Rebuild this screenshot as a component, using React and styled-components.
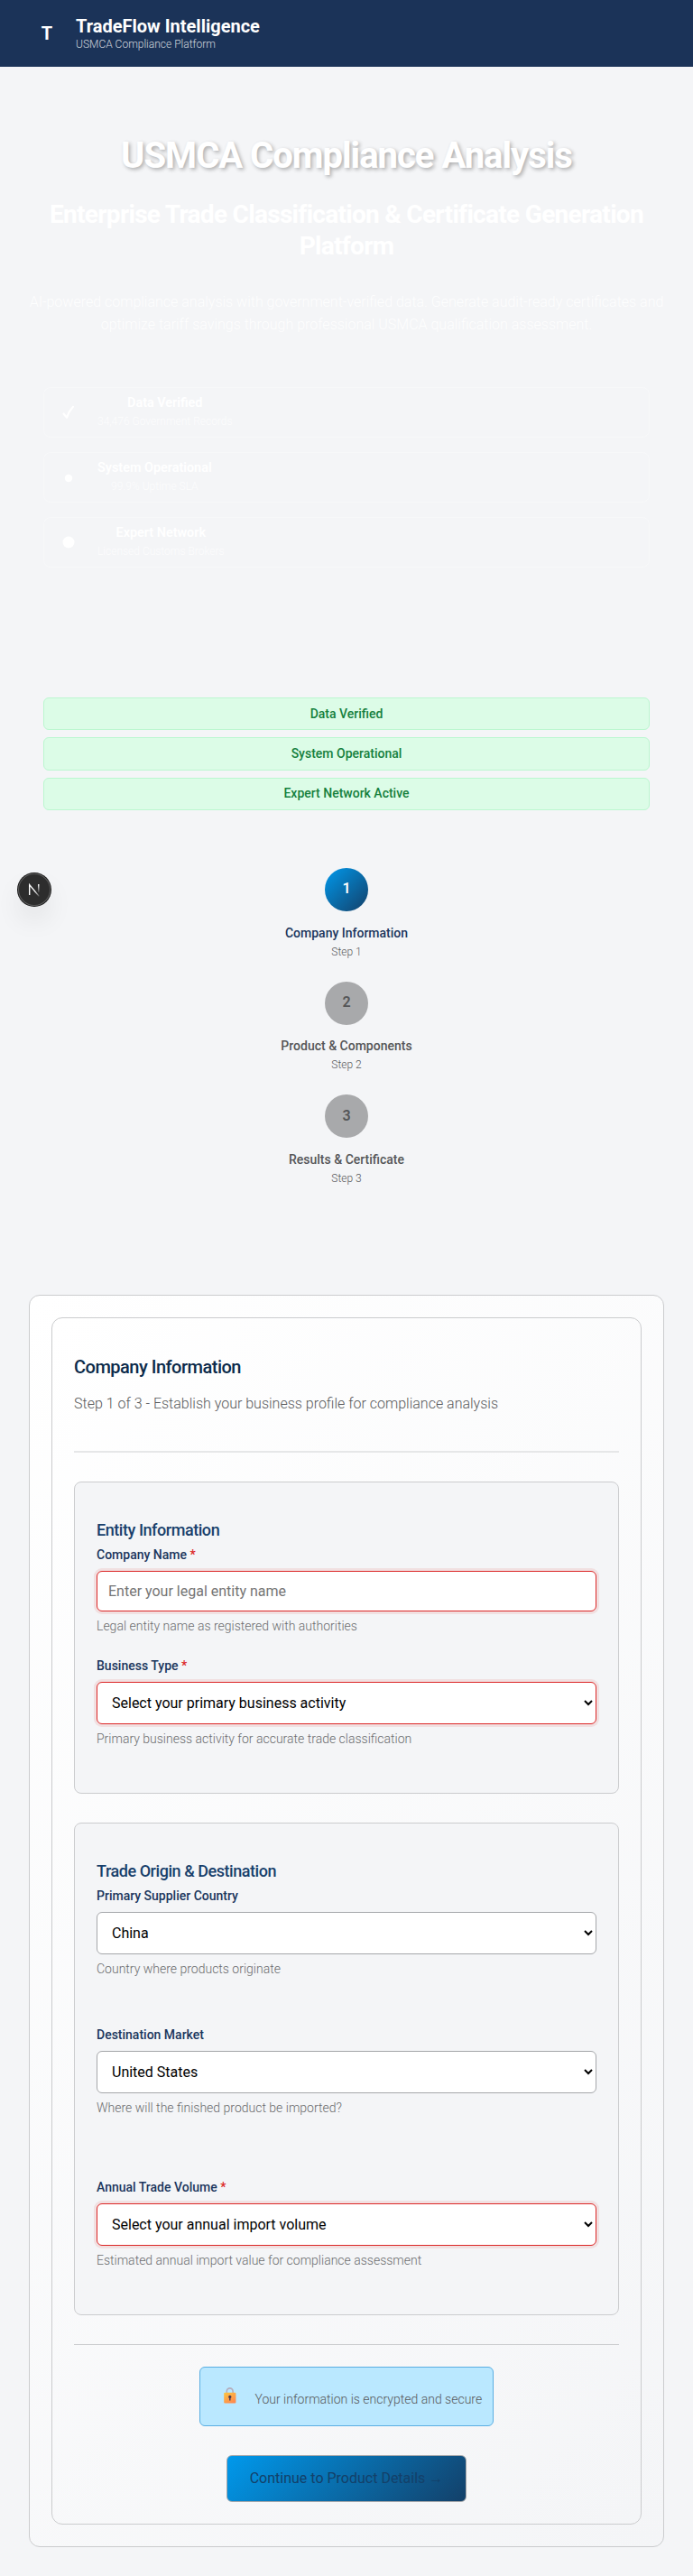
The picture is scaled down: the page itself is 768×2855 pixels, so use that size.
import React from 'react';
import styled, { createGlobalStyle, css } from 'styled-components';

const Global = createGlobalStyle`
  *, *::before, *::after { box-sizing: border-box; }
  body {
    margin: 0;
    background: #f4f5f7;
    font-family: Roboto, "Liberation Sans", sans-serif;
    font-size: 16px;
    font-weight: 300;
    line-height: 1.6;
    color: #134069;
  }
  h1, h2, h3, p { margin: 0; }
`;

const Page = styled.div`
  position: relative;
  display: flex;
  flex-direction: column;
  height: 2855px;
`;

const Header = styled.header`
  display: flex;
  align-items: center;
  gap: 12px;
  height: 74px;
  padding: 0 32px;
  background: #1b3358;
  color: #fff;
`;
const LogoMark = styled.div`
  width: 40px;
  text-align: center;
  font-size: 20px;
  font-weight: 700;
  line-height: 32px;
`;
const Brand = styled.div`
  display: flex;
  flex-direction: column;
`;
const BrandName = styled.div`
  font-size: 20px;
  font-weight: 700;
  line-height: 24px;
`;
const BrandTag = styled.div`
  font-size: 12px;
  line-height: 16px;
  color: rgba(255, 255, 255, 0.8);
`;

const Hero = styled.section`
  display: flex;
  flex-direction: column;
  align-items: center;
  height: 651px;
  padding: 74px 24px 0;
  text-align: center;
  color: #fff;
`;
const HeroTitle = styled.h1`
  font-size: 40px;
  font-weight: 700;
  line-height: 50px;
  letter-spacing: -0.025em;
  text-shadow: 2px 2px 4px rgba(0, 0, 0, 0.3);
`;
const HeroSubtitle = styled.h2`
  margin-top: 22px;
  padding: 0 24px;
  font-size: 28px;
  font-weight: 700;
  line-height: 35px;
  letter-spacing: -0.025em;
`;
const HeroText = styled.p`
  margin-top: 31.5px;
  font-size: 16px;
  opacity: 0.9;
`;
const FeatureList = styled.div`
  display: flex;
  flex-direction: column;
  gap: 16px;
  width: 672px;
  margin-top: 56px;
`;
const Feature = styled.div`
  display: flex;
  align-items: center;
  gap: 21px;
  height: 56px;
  padding: 0 16px;
  border: 1px solid rgba(255, 255, 255, 0.3);
  border-radius: 8px;
`;
const FeatureIcon = styled.div`
  display: flex;
  justify-content: center;
  width: 22px;
`;
const FeatureName = styled.div`
  font-size: 14.4px;
  font-weight: 600;
  line-height: 22px;
`;
const FeatureNote = styled.div`
  font-size: 12px;
  line-height: 19px;
  opacity: 0.8;
`;

const BadgeList = styled.div`
  display: flex;
  flex-direction: column;
  gap: 8px;
  margin: 48px 48px 0;
`;
const Badge = styled.div`
  padding: 5.5px 6px 6.5px;
  border: 1px solid #bbf7d0;
  border-radius: 6px;
  background: #dcfce7;
  color: #15803d;
  font-size: 14px;
  font-weight: 500;
  text-align: center;
`;

const Steps = styled.div`
  display: flex;
  flex-direction: column;
  gap: 23px;
  margin-top: 64px;
`;
const Step = styled.div`
  display: flex;
  flex-direction: column;
  align-items: center;
`;
const StepCircle = styled.div`
  display: flex;
  align-items: center;
  justify-content: center;
  width: 48px;
  height: 48px;
  padding-bottom: 2px;
  margin-bottom: 12.5px;
  border-radius: 50%;
  font-weight: 600;
  background: ${(p) => (p.$active ? 'linear-gradient(135deg, #0099ec, #134069)' : '#a8a9ab')};
  color: ${(p) => (p.$active ? '#fff' : '#555658')};
`;
const StepTitle = styled.div`
  margin-bottom: 0.5px;
  font-size: 14px;
  font-weight: 500;
  color: ${(p) => (p.$active ? '#1b365d' : '#555658')};
`;
const StepNote = styled.div`
  font-size: 12px;
  color: #58595b;
`;

const Card = styled.div`
  padding: 24px;
  border: 1px solid #cbccce;
  border-radius: 12px;
  background: linear-gradient(135deg, #ffffff, #f4f5f7);
`;
const OuterCard = styled(Card)`
  height: 1388px;
  margin: 119px 32px 0;
`;
const FormCard = styled(Card)`
  display: flex;
  flex-direction: column;
  height: 1338px;
`;
const FormHeader = styled.div`
  padding-top: 15.5px;
  height: 125px;
  margin-bottom: 32px;
  border-bottom: 2px solid #e6e7e8;
`;
const FormTitle = styled.h2`
  font-size: 20px;
  font-weight: 500;
  line-height: 30px;
  letter-spacing: -0.025em;
  color: #0b2a4a;
`;
const FormLead = styled.p`
  margin-top: 12.5px;
  font-size: 16px;
  color: #58595b;
`;
const Section = styled.section`
  height: ${(p) => p.$height}px;
  margin-bottom: 32px;
  padding: 37px 24px 0;
  border: 1px solid #cbccce;
  border-radius: 8px;
  background: #f4f5f7;
`;
const SectionTitle = styled.h3`
  margin-bottom: 1px;
  font-size: 18px;
  font-weight: 500;
  line-height: 31px;
  letter-spacing: -0.025em;
  color: #173f6b;
`;
const Field = styled.div`
  display: flex;
  flex-direction: column;
  margin-bottom: ${(p) => p.$gap || 0}px;
`;
const Label = styled.label`
  margin-bottom: 7px;
  font-size: 14px;
  font-weight: 500;
  color: #1b365d;
`;
const Required = styled.span`
  color: #dc2626;
`;
const control = css`
  width: 100%;
  padding: 12px;
  border: 1px solid ${(p) => (p.$invalid ? '#dc2626' : '#a5a7aa')};
  border-radius: 6px;
  background: #fff;
  font-family: inherit;
  font-size: 16px;
  box-shadow: ${(p) => (p.$invalid ? '0 0 0 3px rgba(220, 38, 38, 0.1)' : 'none')};
`;
const TextInput = styled.input`
  ${control}
  height: 45px;
`;
const Select = styled.select`
  ${control}
  height: 47px;
  color: #000;
`;
const Hint = styled.div`
  margin-top: 5px;
  margin-bottom: 0.5px;
  font-size: 14px;
  color: #6b6c6e;
`;
const Footer = styled.div`
  display: flex;
  flex-direction: column;
  align-items: center;
  gap: 32px;
  padding-top: 24px;
  border-top: 1px solid #cbccce;
`;
const Secure = styled.div`
  display: flex;
  align-items: center;
  width: 326px;
  height: 66px;
  padding-left: 26px;
  border: 1px solid #5aaee2;
  border-radius: 6px;
  background: #bae8ff;
`;
const LockIcon = styled.svg`
  width: 14px;
  height: 18px;
  margin-bottom: 2px;
`;
const SecureText = styled.span`
  margin: 6px 0 0 20.5px;
  font-size: 14px;
  color: #58595b;
  white-space: nowrap;
`;
const Submit = styled.button`
  width: 266px;
  height: 52px;
  padding: 0 0 1px;
  border: 1px solid #a5a7aa;
  border-radius: 6px;
  background: linear-gradient(135deg, #0099ec, #134069);
  font-family: inherit;
  font-size: 16px;
  font-weight: 400;
  color: #134069;
`;

const DevBadge = styled.div`
  position: absolute;
  left: 20px;
  top: 968px;
  display: flex;
  align-items: center;
  justify-content: center;
  width: 36px;
  height: 36px;
  border-radius: 50%;
  background: #2d2d2d;
  box-shadow: 0 0 0 1px #171717, inset 0 0 0 1px #5c5c5c, 0 16px 32px -8px rgba(0, 0, 0, 0.24);
`;

const steps = ['Company Information', 'Product & Components', 'Results & Certificate'];

const features = [
  {
    name: 'Data Verified',
    note: '34,476 Government Records',
    icon: (
      <path
        d="M2.500 9.500 6 13.800Q8.500 6.500 13 1.800"
        fill="none"
        stroke="#fff"
        strokeWidth="2.200"
        strokeLinecap="round"
        strokeLinejoin="round"
      />
    ),
  },
  { name: 'System Operational', note: '99.9% Uptime SLA', icon: <circle cx="8" cy="9" r="4.200" fill="#fff" /> },
  { name: 'Expert Network', note: 'Licensed Customs Brokers', icon: <circle cx="8" cy="8" r="6.500" fill="#fff" /> },
];

function SelectField({ label, required, value, hint, gap }) {
  return (
    <Field $gap={gap}>
      <Label>
        {label} {required && <Required>*</Required>}
      </Label>
      <Select $invalid={required} defaultValue={value}>
        <option>{value}</option>
      </Select>
      <Hint>{hint}</Hint>
    </Field>
  );
}

export default function App() {
  return (
    <Page>
      <Global />
      <Header>
        <LogoMark>T</LogoMark>
        <Brand>
          <BrandName>TradeFlow Intelligence</BrandName>
          <BrandTag>USMCA Compliance Platform</BrandTag>
        </Brand>
      </Header>

      <Hero>
        <HeroTitle>USMCA Compliance Analysis</HeroTitle>
        <HeroSubtitle>Enterprise Trade Classification &amp; Certificate Generation Platform</HeroSubtitle>
        <HeroText>
          AI-powered compliance analysis with government-verified data. Generate audit-ready certificates and optimize
          tariff savings through professional USMCA qualification assessment.
        </HeroText>
        <FeatureList>
          {features.map((f) => (
            <Feature key={f.name}>
              <FeatureIcon>
                <svg width="16" height="16" viewBox="0 0 16 16">{f.icon}</svg>
              </FeatureIcon>
              <div>
                <FeatureName>{f.name}</FeatureName>
                <FeatureNote>{f.note}</FeatureNote>
              </div>
            </Feature>
          ))}
        </FeatureList>
      </Hero>

      <BadgeList>
        <Badge>Data Verified</Badge>
        <Badge>System Operational</Badge>
        <Badge>Expert Network Active</Badge>
      </BadgeList>

      <Steps>
        {steps.map((title, i) => (
          <Step key={title}>
            <StepCircle $active={i === 0}>{i + 1}</StepCircle>
            <StepTitle $active={i === 0}>{title}</StepTitle>
            <StepNote>Step {i + 1}</StepNote>
          </Step>
        ))}
      </Steps>

      <OuterCard>
        <FormCard>
          <FormHeader>
            <FormTitle>Company Information</FormTitle>
            <FormLead>Step 1 of 3 - Establish your business profile for compliance analysis</FormLead>
          </FormHeader>

          <Section $height={346}>
            <SectionTitle>Entity Information</SectionTitle>
            <Field $gap={20.5}>
              <Label>
                Company Name <Required>*</Required>
              </Label>
              <TextInput $invalid placeholder="Enter your legal entity name" />
              <Hint>Legal entity name as registered with authorities</Hint>
            </Field>
            <SelectField
              label="Business Type"
              required
              value="Select your primary business activity"
              hint="Primary business activity for accurate trade classification"
            />
          </Section>

          <Section $height={546}>
            <SectionTitle>Trade Origin &amp; Destination</SectionTitle>
            <SelectField label="Primary Supplier Country" value="China" hint="Country where products originate" gap={49.5} />
            <SelectField
              label="Destination Market"
              value="United States"
              hint="Where will the finished product be imported?"
              gap={65}
            />
            <SelectField
              label="Annual Trade Volume"
              required
              value="Select your annual import volume"
              hint="Estimated annual import value for compliance assessment"
            />
          </Section>

          <Footer>
            <Secure>
              <LockIcon viewBox="0 0 14 18">
                <defs>
                  <linearGradient id="lockBody" x1="0" y1="0" x2="0.6" y2="1">
                    <stop offset="0" stopColor="#fbc63f" />
                    <stop offset="1" stopColor="#ff8b4e" />
                  </linearGradient>
                </defs>
                <path d="M3.300 7V4.300a3.400 3.400 0 0 1 6.800 0V7" fill="none" stroke="#b4acbc" strokeWidth="1.600" />
                <rect x="0.200" y="5.800" width="13.200" height="11.700" rx="1" fill="url(#lockBody)" />
                <circle cx="6.800" cy="10.400" r="1.600" fill="#4a3a50" />
                <path d="M6.800 10.500v4" stroke="#4a3a50" strokeWidth="1.400" />
              </LockIcon>
              <SecureText>Your information is encrypted and secure</SecureText>
            </Secure>
            <Submit>Continue to Product Details →</Submit>
          </Footer>
        </FormCard>
      </OuterCard>

      <DevBadge>
        <svg width="14" height="16" viewBox="0 0 14 16" fill="none">
          <defs>
            <linearGradient id="stem" x1="0" y1="2" x2="0" y2="12" gradientUnits="userSpaceOnUse">
              <stop offset="0" stopColor="#fff" />
              <stop offset="1" stopColor="#fff" stopOpacity="0" />
            </linearGradient>
            <linearGradient id="slash" x1="2" y1="2" x2="12" y2="15" gradientUnits="userSpaceOnUse">
              <stop offset="0.600" stopColor="#fff" />
              <stop offset="1" stopColor="#fff" stopOpacity="0.200" />
            </linearGradient>
          </defs>
          <path d="M1.700 14V2.600L12.300 15.400" stroke="url(#slash)" strokeWidth="1.400" />
          <rect x="11" y="2" width="1.500" height="9" fill="url(#stem)" />
        </svg>
      </DevBadge>
    </Page>
  );
}
